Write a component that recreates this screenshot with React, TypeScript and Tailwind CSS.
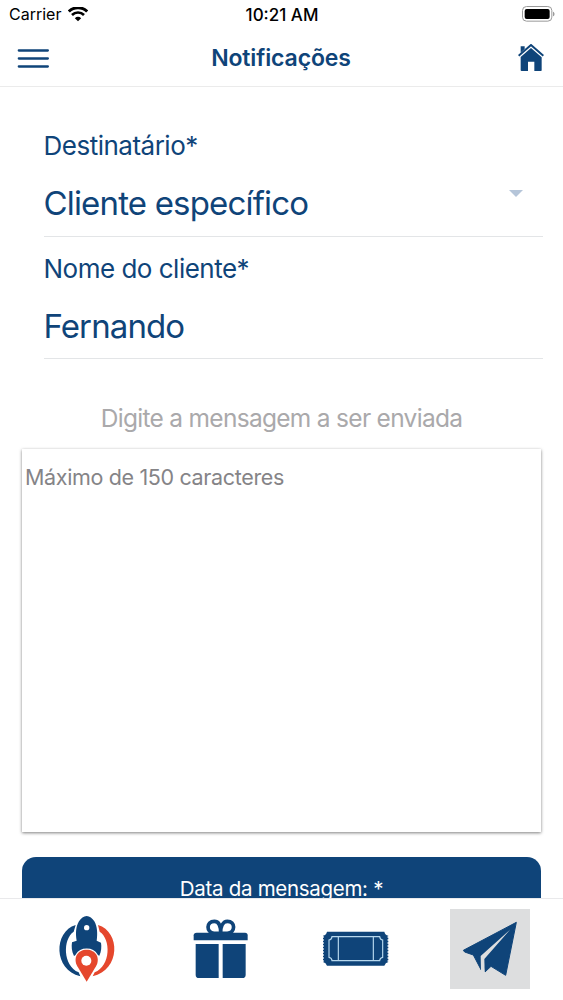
import type { ReactNode } from 'react';

const WifiIcon = () => (
  <svg className="w-5 h-[15px]" viewBox="0 0 60 45" fill="none" stroke="#000">
    <path d="M2.500 13.500 C18 -1.500 42 -1.500 57.500 13.500" strokeWidth="9" />
    <path d="M12 24 C22 14 38 14 48 24" strokeWidth="8" />
    <path d="M30 43 L20.500 33.500 C26 28 34 28 39.500 33.500 Z" fill="#000" stroke="none" />
  </svg>
);

const BatteryIcon = () => (
  <svg className="w-[33px] h-[16px]" viewBox="0 0 99 48">
    <rect x="1.500" y="1.500" width="88" height="44" rx="12" fill="#fff" stroke="#9a9a9a" strokeWidth="3" />
    <rect x="8" y="9" width="75" height="30" rx="6" fill="#000" />
    <path d="M93 17 C99 19 99 29 93 31 Z" fill="#9a9a9a" />
  </svg>
);

const MenuIcon = () => (
  <svg className="mt-[2px] w-8 h-[21px]" viewBox="0 0 96 63" stroke="#0f4479" strokeWidth="7" strokeLinecap="round">
    <path d="M5.500 7.500 H92.500 M5.500 31.500 H92.500 M5.500 55.500 H92.500" />
  </svg>
);

const HomeIcon = () => (
  <svg className="w-[26px] h-[27px]" viewBox="0 0 78 81" fill="#0f4479">
    <path d="M8 7 H20 V15 L8 26 Z" />
    <path d="M2 35 L39 3 L76 35" fill="none" stroke="#0f4479" strokeWidth="6" />
    <path d="M39 12 L71 40 V79 Q71 81 69 81 H49 V53 H30 V81 H11 Q8 81 8 79 V39 Z" />
  </svg>
);

const RocketIcon = () => (
  <svg className="size-20" viewBox="21 42 240 240">
    <path d="M107 90 C40 110 40 225 121 244 L116 232 C68 212 68 132 101 110 Z" fill="#0f4479" />
    <path d="M174 90 C242 110 242 225 158 244 L164 232 C213 212 213 132 179 110 Z" fill="#e5472d" />
    <path
      d="M140 63 C149 63 157 70 163 79 C172 94 173 116 170 137 L183 143 C185 155 184 169 178 182 L168 178 L140 210 L112 178 L102 183 C95 170 94 155 96 142 L110 137 C106 114 108 94 117 79 C123 70 131 63 140 63 Z"
      fill="#0f4479"
    />
    <circle cx="140" cy="98" r="8" fill="#fff" />
    <path
      d="M140 260 L112 214 C98 188 113 164 140 164 C167 164 182 188 168 214 Z"
      fill="#e5472d"
      stroke="#fff"
      strokeWidth="7"
      paintOrder="stroke"
    />
    <circle cx="139" cy="197" r="15" fill="#fff" />
  </svg>
);

const GiftIcon = () => (
  <svg className="size-20" viewBox="19 42 240 240" fill="#0f4479">
    <path
      d="M134 115 H118 C94 113 94 79 119 79 C132 79 138 94 138 113 C138 94 145 79 158 79 C183 79 183 113 158 115 Z"
      fill="none"
      stroke="#0f4479"
      strokeWidth="11"
    />
    <path d="M66 113 H211 Q219 113 219 121 V136 H57 V121 Q57 113 66 113 Z" />
    <path d="M63 147 H132 V249 H73 Q63 249 63 239 Z" />
    <path d="M144 147 H213 V239 Q213 249 203 249 H144 Z" />
  </svg>
);

const TicketIcon = () => (
  <svg className="size-20" viewBox="32 42 240 240">
    <path d="M65 110 H237 Q239 120 249 122 V201 Q240 203 237 212 H65 Q62 203 53 201 V122 Q63 120 65 110 Z" fill="#0f4479" />
    <path d="M53 124 V201 M249 124 V201" stroke="#fff" strokeWidth="5" strokeDasharray="4 5" />
    <g fill="none" stroke="#b7d8ee" strokeWidth="3.500">
      <path d="M80 125 H223 Q224 134 232 135 V187 Q224 188 223 197 H80 Q79 188 71 187 V135 Q79 134 80 125 Z" />
      <path d="M99 125 V197 M204 125 V197" />
    </g>
  </svg>
);

const PlaneIcon = () => (
  <svg className="size-20" viewBox="45 267 240 240" fill="#0f4479" stroke="#0f4479" strokeWidth="3" strokeLinejoin="round">
    <path d="M244 307 L85 391 L89 396 L115 405 L138 449 L139 411 L224 329 L146 418 L150 456 L168 439 L212 466 Z" />
    <path d="M226 328 L137 408 L138 453 L149 459 L148 417 Z" fill="#dddedf" stroke="none" />
  </svg>
);

const Field = ({ label, children }: { label: string; children: ReactNode }) => (
  <div className="h-[122.500px] border-b border-[#e3e5e7]">
    <div className="pt-3.5 text-[26px] leading-[35px] tracking-[-0.5px]">{label}</div>
    {children}
  </div>
);

const tabs = [
  { id: 'home', icon: <RocketIcon /> },
  { id: 'gifts', icon: <GiftIcon /> },
  { id: 'tickets', icon: <TicketIcon /> },
  { id: 'messages', icon: <PlaneIcon />, active: true },
];

const App = () => {
  return (
    <div className="flex h-screen flex-col overflow-hidden bg-white font-['Inter',sans-serif] text-[#0f4479]">
      {/* Status bar */}
      <div className="grid h-7 shrink-0 grid-cols-3 items-center pl-[9px] pr-2 text-[16px] text-black">
        <div className="flex items-center gap-[7px]">
          <span>Carrier</span>
          <WifiIcon />
        </div>
        <div className="pt-px text-center text-[17px] leading-[24px] font-medium whitespace-nowrap">10:21 AM</div>
        <div className="flex justify-end">
          <BatteryIcon />
        </div>
      </div>

      <header className="grid h-[59px] shrink-0 grid-cols-3 items-center border-b border-[#ebebeb] pl-[17px] pr-[19px]">
        <MenuIcon />
        <h1 className="pt-[2px] pl-px text-center text-[23px] font-semibold tracking-[-0.12px] whitespace-nowrap">Notificações</h1>
        <div className="flex justify-end">
          <HomeIcon />
        </div>
      </header>

      <main className="min-h-0 flex-1 overflow-hidden px-[22px] pt-[27px]">
        <div className="ml-[21.500px] mr-[-2px]">
          <Field label="Destinatário*">
            <div className="flex justify-between pr-5">
              <span className="mt-[17px] text-[33px] leading-[46px] tracking-[-0.83px]">Cliente específico</span>
              <svg className="mt-[27px] h-[7px] w-[14px]" viewBox="0 0 14 7" fill="#b5c5d9">
                <path d="M0 0 H14 L7 7 Z" />
              </svg>
            </div>
          </Field>
          <Field label="Nome do cliente*">
            <div className="mt-[17px] text-[33px] leading-[46px] tracking-[-0.9px]">Fernando</div>
          </Field>
        </div>

        <p className="mt-[41px] text-center text-[24.500px] leading-[36px] tracking-[-0.7px] text-[#aaa9ab]">
          Digite a mensagem a ser enviada
        </p>
        <div className="mt-[13px] h-[383px] bg-white px-[3px] pt-3 text-[21.500px] leading-[32px] tracking-[-0.35px] text-[#858487] shadow-[0_1px_3px_rgba(0,0,0,0.5)]">
          Máximo de 150 caracteres
        </div>

        <div className="mt-[25px] h-[90px] rounded-t-[14px] bg-[#0f4479] pt-[17px] text-center text-[20.500px] leading-[30px] tracking-[-0.3px] text-white">
          Data da mensagem: *
        </div>
      </main>

      <nav className="flex h-[102px] shrink-0 items-start justify-between border-t border-[#e9e9eb] bg-white pt-2.5 pl-[47px] pr-[33px]">
        {tabs.map((tab) => (
          <button key={tab.id} className={tab.active ? 'bg-[#dddedf]' : ''}>
            {tab.icon}
          </button>
        ))}
      </nav>
    </div>
  );
};

export default App;
